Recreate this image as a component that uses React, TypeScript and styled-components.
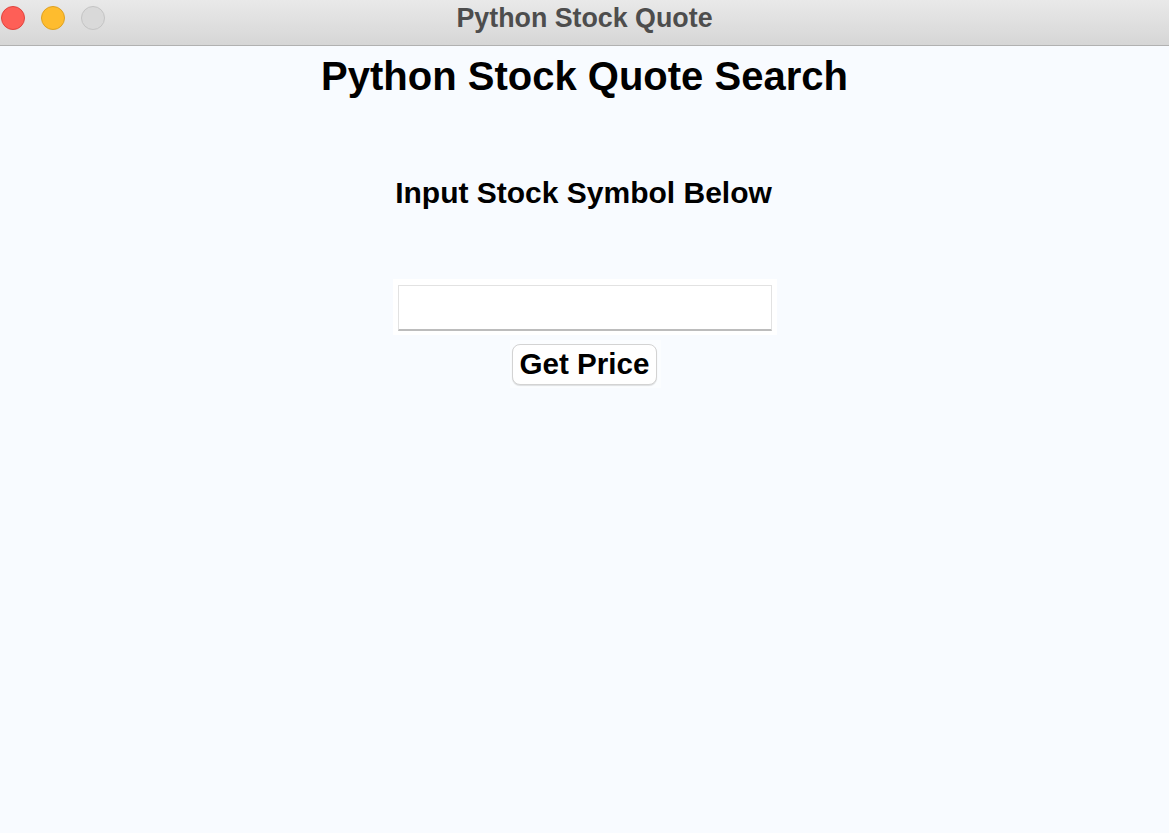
import React from "react";
import styled, { createGlobalStyle } from "styled-components";

const GlobalStyle = createGlobalStyle`
  html, body {
    margin: 0;
    padding: 0;
    background: #f8fbff;
  }
  body {
    font-family: "Liberation Sans", Arial, Helvetica, sans-serif;
    overflow: hidden;
  }
`;

const Window = styled.div`
  width: 1169px;
  height: 833px;
  display: flex;
  flex-direction: column;
  background: #f8fbff;
`;

const TitleBar = styled.div`
  position: relative;
  height: 45px;
  flex: 0 0 45px;
  display: flex;
  align-items: center;
  justify-content: center;
  background: linear-gradient(#e9e9e9, #d6d6d6);
  border-bottom: 1px solid #b1b1b1;
`;

const Lights = styled.div`
  position: absolute;
  left: 1px;
  top: 6px;
  display: flex;
  gap: 16px;
`;

const Light = styled.span<{ $fill: string; $edge: string }>`
  width: 24px;
  height: 24px;
  box-sizing: border-box;
  border-radius: 50%;
  background: ${(p) => p.$fill};
  border: 1px solid ${(p) => p.$edge};
`;

const WindowTitle = styled.div`
  font-weight: 700;
  font-size: 26.8px;
  color: #4d4d4d;
  margin-top: -8px;
`;

const Content = styled.main`
  flex: 1;
  display: flex;
  flex-direction: column;
  align-items: center;
  padding-top: 7px;
`;

const Heading = styled.h1`
  margin: 0;
  font-size: 40px;
  line-height: 46px;
  font-weight: 700;
  color: #000;
`;

const SubHeading = styled.h2`
  margin: 77px 2px 0 0;
  font-size: 30px;
  line-height: 34px;
  font-weight: 700;
  color: #000;
`;

const EntryFrame = styled.div`
  margin-top: 69px;
  margin-left: 1px;
  padding: 6px 5px 4px 5px;
  background: #ffffff;
`;

const Entry = styled.input`
  display: block;
  width: 374px;
  height: 46px;
  box-sizing: border-box;
  border: 1px solid #e2e2e2;
  border-bottom: 2px solid #bcbcbc;
  background: #fff;
  outline: none;
  font-family: "Liberation Sans", Arial, sans-serif;
  font-size: 20px;
  padding: 0 6px;
`;

const ButtonFrame = styled.div`
  margin-top: 5px;
  margin-left: 2px;
  padding: 4px 4px 3px 2px;
  background: #fbfdff;
`;

const Button = styled.button`
  display: block;
  width: 145px;
  height: 41px;
  box-sizing: border-box;
  border: 1px solid #d3d3d3;
  border-radius: 8px;
  background: #fff;
  box-shadow: 0 1px 1px rgba(0, 0, 0, 0.12);
  font-family: "Liberation Sans", Arial, sans-serif;
  font-weight: 700;
  font-size: 29.6px;
  line-height: 1;
  color: #000;
  padding: 0 0 2px;
  cursor: pointer;
`;

export default function App() {
  return (
    <>
      <GlobalStyle />
      <Window>
        <TitleBar>
          <Lights>
            <Light $fill="#fe5f57" $edge="#e0443e" />
            <Light $fill="#febc2e" $edge="#dea123" />
            <Light $fill="#d9d9d9" $edge="#c4c4c4" />
          </Lights>
          <WindowTitle>Python Stock Quote</WindowTitle>
        </TitleBar>
        <Content>
          <Heading>Python Stock Quote Search</Heading>
          <SubHeading>Input Stock Symbol Below</SubHeading>
          <EntryFrame>
            <Entry type="text" aria-label="Stock symbol" />
          </EntryFrame>
          <ButtonFrame>
            <Button type="button">Get Price</Button>
          </ButtonFrame>
        </Content>
      </Window>
    </>
  );
}
